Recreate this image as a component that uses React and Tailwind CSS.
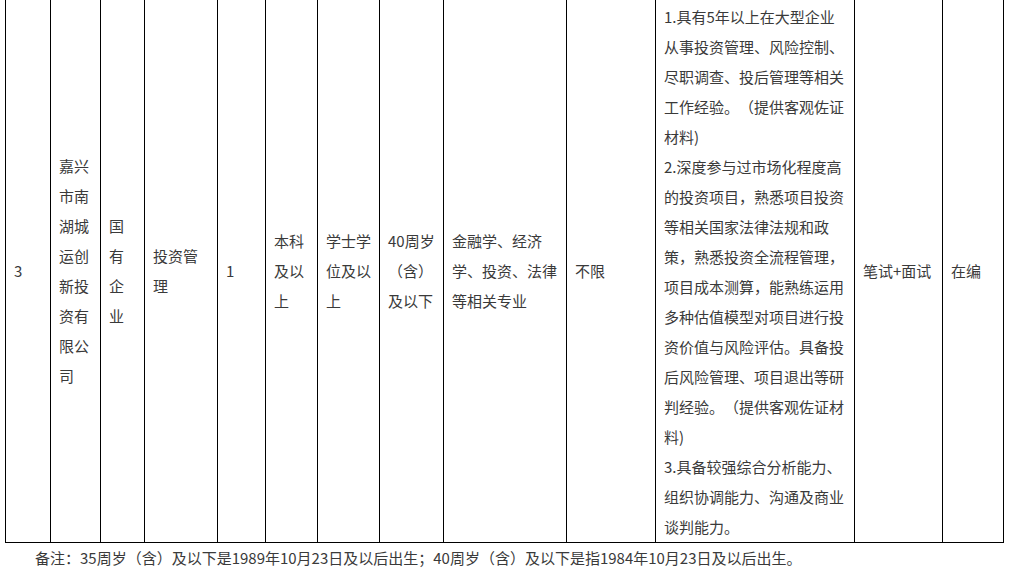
const cols = [45, 50, 44, 73, 48, 52, 62, 64, 123, 89, 199, 88, 61]

const desc = [
  '1.具有5年以上在大型企业',
  '从事投资管理、风险控制、',
  '尽职调查、投后管理等相关',
  '工作经验。（提供客观佐证',
  '材料)',
  '2.深度参与过市场化程度高',
  '的投资项目，熟悉项目投资',
  '等相关国家法律法规和政',
  '策，熟悉投资全流程管理，',
  '项目成本测算，能熟练运用',
  '多种估值模型对项目进行投',
  '资价值与风险评估。具备投',
  '后风险管理、项目退出等研',
  '判经验。（提供客观佐证材',
  '料)',
  '3.具备较强综合分析能力、',
  '组织协调能力、沟通及商业',
  '谈判能力。',
]

function Lines({ items }) {
  return (
    <>
      {items.map((t, i) => (
        <div key={i} className="whitespace-nowrap">{t}</div>
      ))}
    </>
  )
}

function Cell({ children }) {
  return <td className="border border-black px-2 py-0 align-middle">{children}</td>
}

export default function App() {
  return (
    <div
      className="w-[1009px] h-[571px] overflow-hidden bg-white text-[15px] leading-[30px] text-[#3a3a3a] [text-spacing-trim:space-all]"
      style={{ fontFamily: '"Noto Sans CJK SC", "Liberation Sans", sans-serif' }}
    >
      <table className="table-fixed border-collapse border border-black w-[998px] ml-[5px] -mt-px">
        <colgroup>
          {cols.map((w, i) => (
            <col key={i} style={{ width: w }} />
          ))}
        </colgroup>
        <tbody>
          <tr>
            <Cell>3</Cell>
            <Cell><Lines items={['嘉兴', '市南', '湖城', '运创', '新投', '资有', '限公', '司']} /></Cell>
            <Cell><Lines items={['国', '有', '企', '业']} /></Cell>
            <Cell><Lines items={['投资管', '理']} /></Cell>
            <Cell>1</Cell>
            <Cell><Lines items={['本科', '及以', '上']} /></Cell>
            <Cell><Lines items={['学士学', '位及以', '上']} /></Cell>
            <Cell><Lines items={['40周岁', '（含）', '及以下']} /></Cell>
            <Cell><Lines items={['金融学、经济', '学、投资、法律', '等相关专业']} /></Cell>
            <Cell>不限</Cell>
            <Cell><div className="pt-[2px]"><Lines items={desc} /></div></Cell>
            <Cell><span className="whitespace-nowrap">笔试+面试</span></Cell>
            <Cell>在编</Cell>
          </tr>
        </tbody>
      </table>
      <div className="pl-[35px] whitespace-nowrap">
        备注：35周岁（含）及以下是1989年10月23日及以后出生；40周岁（含）及以下是指1984年10月23日及以后出生。
      </div>
    </div>
  )
}
